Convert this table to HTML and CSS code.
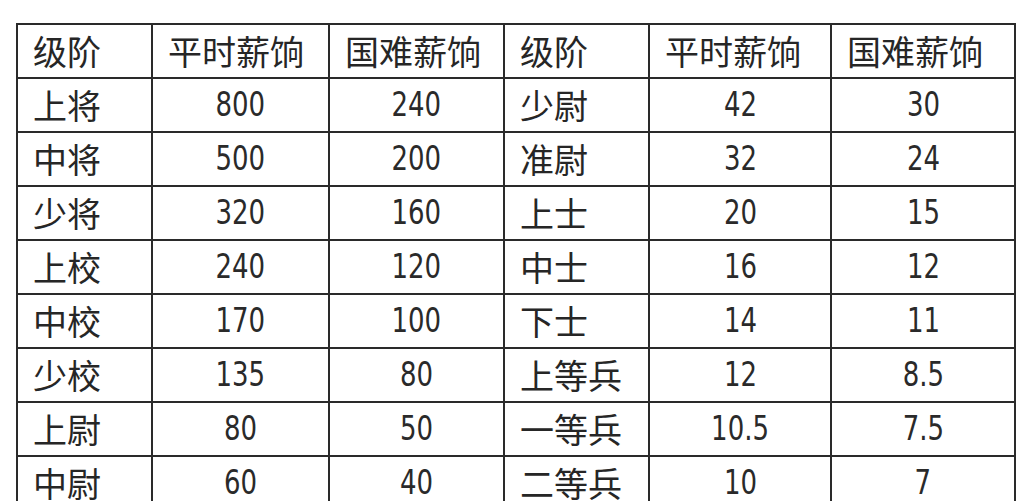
FILE: index.html
```html
<!DOCTYPE html>
<html lang="zh-CN">
<head>
<meta charset="utf-8">
<title>薪饷表</title>
<link rel="stylesheet" href="styles.css">
</head>
<body>
<table class="pay">
  <colgroup>
    <col class="c1"><col class="c2"><col class="c3"><col class="c4"><col class="c5"><col class="c6">
  </colgroup>
  <tr class="head">
    <td>级阶</td><td>平时薪饷</td><td>国难薪饷</td><td>级阶</td><td>平时薪饷</td><td>国难薪饷</td>
  </tr>
  <tr><td>上将</td><td class="n"><span>800</span></td><td class="n"><span>240</span></td><td>少尉</td><td class="n"><span>42</span></td><td class="n"><span>30</span></td></tr>
  <tr><td>中将</td><td class="n"><span>500</span></td><td class="n"><span>200</span></td><td>准尉</td><td class="n"><span>32</span></td><td class="n"><span>24</span></td></tr>
  <tr><td>少将</td><td class="n"><span>320</span></td><td class="n"><span>160</span></td><td>上士</td><td class="n"><span>20</span></td><td class="n"><span>15</span></td></tr>
  <tr><td>上校</td><td class="n"><span>240</span></td><td class="n"><span>120</span></td><td>中士</td><td class="n"><span>16</span></td><td class="n"><span>12</span></td></tr>
  <tr><td>中校</td><td class="n"><span>170</span></td><td class="n"><span>100</span></td><td>下士</td><td class="n"><span>14</span></td><td class="n"><span>11</span></td></tr>
  <tr><td>少校</td><td class="n"><span>135</span></td><td class="n"><span>80</span></td><td>上等兵</td><td class="n"><span>12</span></td><td class="n"><span>8.5</span></td></tr>
  <tr><td>上尉</td><td class="n"><span>80</span></td><td class="n"><span>50</span></td><td>一等兵</td><td class="n"><span>10.5</span></td><td class="n"><span>7.5</span></td></tr>
  <tr><td>中尉</td><td class="n"><span>60</span></td><td class="n"><span>40</span></td><td>二等兵</td><td class="n"><span>10</span></td><td class="n"><span>7</span></td></tr>
</table>
</body>
</html>
```
FILE: styles.css
```css
html, body {
  margin: 0;
  padding: 0;
  background: #ffffff;
}
body {
  padding: 23px 0 0 16px;
  font-family: "Noto Sans CJK SC", "Noto Sans", sans-serif;
  color: #262626;
}
.pay {
  border-collapse: collapse;
  table-layout: fixed;
  width: 1000px;
}
.c1 { width: 135px; }
.c2 { width: 177px; }
.c3 { width: 175px; }
.c4 { width: 145px; }
.c5 { width: 182px; }
.c6 { width: 184px; }
.pay tr { height: 54px; }
.pay td {
  border: 2px solid #2a2a2a;
  padding: 0 0 0 15px;
  font-size: 34px;
  line-height: 1;
  text-align: left;
  vertical-align: middle;
  white-space: nowrap;
}
.pay td.n {
  text-align: center;
  padding: 0 8px 3px;
  font-family: "DejaVu Sans Condensed", "DejaVu Sans", sans-serif;
  font-size: 34px;
  color: #2a2a2a;
}
.pay td.n span {
  display: inline-block;
  transform: scaleX(0.85);
}
```
